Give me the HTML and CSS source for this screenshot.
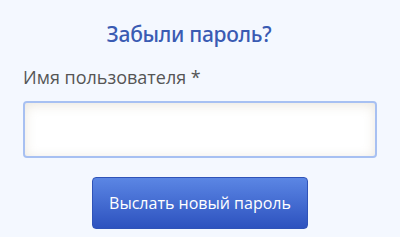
FILE: index.html
```html
<!DOCTYPE html>
<html lang="ru">
<head>
<meta charset="utf-8">
<link rel="stylesheet" href="styles.css">
</head>
<body>
<div class="page">
  <h1 class="title">Забыли пароль?</h1>
  <label class="label" for="user">Имя пользователя *</label>
  <input class="field" id="user" type="text">
  <div class="actions">
    <button class="btn" type="button">Выслать новый пароль</button>
  </div>
</div>
</body>
</html>
```

FILE: styles.css
```css
html, body {
  margin: 0;
  padding: 0;
  background: #f4f8ff;
}
.page {
  width: 400px;
  height: 237px;
  box-sizing: border-box;
  padding: 18px 23px 0 23px;
  font-family: "Open Sans", "Noto Sans", sans-serif;
  display: flex;
  flex-direction: column;
}
.title {
  margin: 0 22px 0 0;
  text-align: center;
  font-family: "Noto Sans", "Open Sans", sans-serif;
  font-size: 21px;
  font-weight: 500;
  letter-spacing: -0.3px;
  color: #3a5bb3;
  line-height: 32px;
}
.label {
  margin-top: 14px;
  font-size: 18px;
  line-height: 26px;
  color: #555555;
}
.field {
  margin-top: 11px;
  height: 57px;
  box-sizing: border-box;
  border: 2px solid #a7c0f2;
  border-radius: 4px;
  background: #ffffff;
  box-shadow: inset 0 2px 12px rgba(150, 130, 90, 0.2);
  outline: none;
}
.actions {
  margin-top: 19px;
  display: flex;
  justify-content: center;
}
.btn {
  width: 216px;
  height: 52px;
  border: 1px solid #2f53b8;
  border-radius: 4px;
  background: linear-gradient(#5b86e4, #2d52bf);
  color: #ffffff;
  font-family: "Open Sans", "Noto Sans", sans-serif;
  font-size: 16px;
  padding: 0;
}
```
